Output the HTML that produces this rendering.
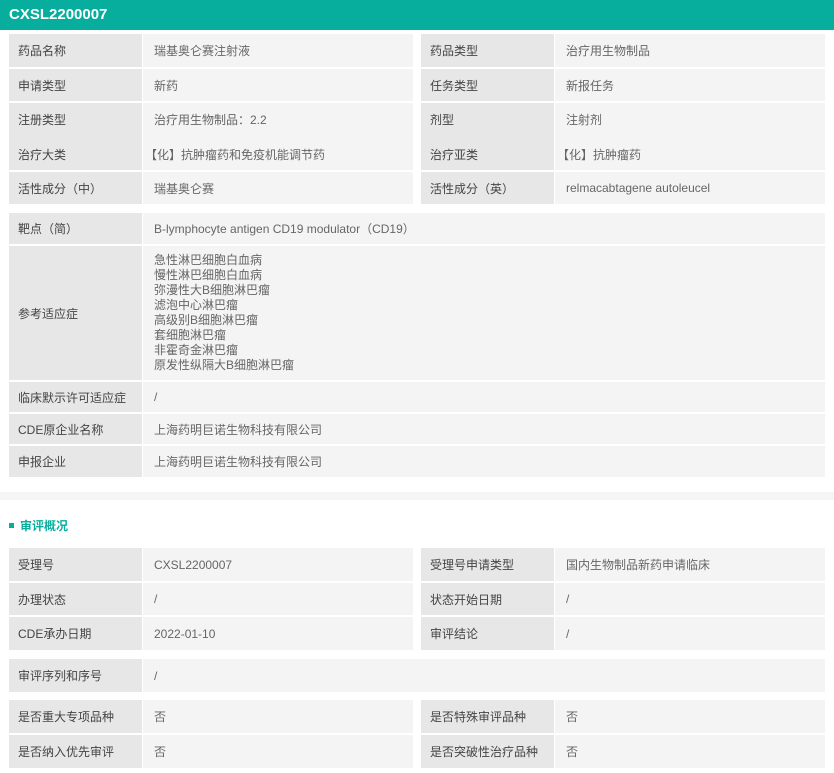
<!DOCTYPE html>
<html><head><meta charset="utf-8"><style>
*{margin:0;padding:0;box-sizing:border-box}
body{width:834px;height:773px;background:#fff;position:relative;overflow:hidden;font-family:"Liberation Sans","Noto Sans CJK SC",sans-serif;font-size:12px;color:#333}
.h{position:absolute;left:0;top:0;width:834px;height:30px;background:#07ae9e;color:#fff;font-weight:bold;font-size:15px;line-height:30px;padding-left:9px}
.c{position:absolute;display:flex;align-items:center;padding-left:9px;white-space:nowrap}
.l{background:#e7e7e7;color:#444}
.v{background:#f4f4f4;color:#666;padding-left:11px}
.band{position:absolute;left:0;top:492px;width:834px;height:8px;background:#f5f5f5}
.t{position:absolute;left:9px;top:517px;color:#07ae9e;font-weight:bold;font-size:12px}
.t:before{content:"";display:inline-block;width:5px;height:5px;background:#07ae9e;margin-right:6px;vertical-align:2px}
.ml{line-height:15px;display:block;padding-top:7px}
</style></head><body>
<div class="h">CXSL2200007</div>

<div class="c l" style="left:9px;top:34px;width:133px;height:33px">药品名称</div>
<div class="c v" style="left:143px;top:34px;width:270px;height:33px">瑞基奥仑赛注射液</div>
<div class="c l" style="left:421px;top:34px;width:133px;height:33px">药品类型</div>
<div class="c v" style="left:555px;top:34px;width:270px;height:33px">治疗用生物制品</div>

<div class="c l" style="left:9px;top:69px;width:133px;height:32px">申请类型</div>
<div class="c v" style="left:143px;top:69px;width:270px;height:32px">新药</div>
<div class="c l" style="left:421px;top:69px;width:133px;height:32px">任务类型</div>
<div class="c v" style="left:555px;top:69px;width:270px;height:32px">新报任务</div>

<div class="c l" style="left:9px;top:103px;width:133px;height:67px"></div>
<div class="c v" style="left:143px;top:103px;width:270px;height:67px"></div>
<div class="c l" style="left:421px;top:103px;width:133px;height:67px"></div>
<div class="c v" style="left:555px;top:103px;width:270px;height:67px"></div>
<div class="c" style="left:9px;top:103px;height:33px;color:#444">注册类型</div>
<div class="c" style="left:145px;top:103px;height:33px;color:#666">治疗用生物制品：2.2</div>
<div class="c" style="left:421px;top:103px;height:33px;color:#444">剂型</div>
<div class="c" style="left:557px;top:103px;height:33px;color:#666">注射剂</div>
<div class="c" style="left:9px;top:138px;height:33px;color:#444">治疗大类</div>
<div class="c" style="left:136px;top:138px;height:33px;color:#666">【化】抗肿瘤药和免疫机能调节药</div>
<div class="c" style="left:421px;top:138px;height:33px;color:#444">治疗亚类</div>
<div class="c" style="left:548px;top:138px;height:33px;color:#666">【化】抗肿瘤药</div>

<div class="c l" style="left:9px;top:172px;width:133px;height:32px">活性成分（中）</div>
<div class="c v" style="left:143px;top:172px;width:270px;height:32px">瑞基奥仑赛</div>
<div class="c l" style="left:421px;top:172px;width:133px;height:32px">活性成分（英）</div>
<div class="c v" style="left:555px;top:172px;width:270px;height:32px">relmacabtagene autoleucel</div>

<div class="c l" style="left:9px;top:213px;width:133px;height:31px">靶点（简）</div>
<div class="c v" style="left:143px;top:213px;width:682px;height:31px">B-lymphocyte antigen CD19 modulator（CD19）</div>

<div class="c l" style="left:9px;top:246px;width:133px;height:134px">参考适应症</div>
<div class="c v" style="left:143px;top:246px;width:682px;height:134px;align-items:flex-start"><span class="ml">急性淋巴细胞白血病<br>慢性淋巴细胞白血病<br>弥漫性大B细胞淋巴瘤<br>滤泡中心淋巴瘤<br>高级别B细胞淋巴瘤<br>套细胞淋巴瘤<br>非霍奇金淋巴瘤<br>原发性纵隔大B细胞淋巴瘤</span></div>

<div class="c l" style="left:9px;top:382px;width:133px;height:30px">临床默示许可适应症</div>
<div class="c v" style="left:143px;top:382px;width:682px;height:30px">/</div>
<div class="c l" style="left:9px;top:414px;width:133px;height:30px">CDE原企业名称</div>
<div class="c v" style="left:143px;top:414px;width:682px;height:30px">上海药明巨诺生物科技有限公司</div>
<div class="c l" style="left:9px;top:446px;width:133px;height:31px">申报企业</div>
<div class="c v" style="left:143px;top:446px;width:682px;height:31px">上海药明巨诺生物科技有限公司</div>

<div class="band"></div>
<div class="t">审评概况</div>

<div class="c l" style="left:9px;top:548px;width:133px;height:33px">受理号</div>
<div class="c v" style="left:143px;top:548px;width:270px;height:33px">CXSL2200007</div>
<div class="c l" style="left:421px;top:548px;width:133px;height:33px">受理号申请类型</div>
<div class="c v" style="left:555px;top:548px;width:270px;height:33px">国内生物制品新药申请临床</div>

<div class="c l" style="left:9px;top:583px;width:133px;height:32px">办理状态</div>
<div class="c v" style="left:143px;top:583px;width:270px;height:32px">/</div>
<div class="c l" style="left:421px;top:583px;width:133px;height:32px">状态开始日期</div>
<div class="c v" style="left:555px;top:583px;width:270px;height:32px">/</div>

<div class="c l" style="left:9px;top:617px;width:133px;height:33px">CDE承办日期</div>
<div class="c v" style="left:143px;top:617px;width:270px;height:33px">2022-01-10</div>
<div class="c l" style="left:421px;top:617px;width:133px;height:33px">审评结论</div>
<div class="c v" style="left:555px;top:617px;width:270px;height:33px">/</div>

<div class="c l" style="left:9px;top:659px;width:133px;height:33px">审评序列和序号</div>
<div class="c v" style="left:143px;top:659px;width:682px;height:33px">/</div>

<div class="c l" style="left:9px;top:700px;width:133px;height:33px">是否重大专项品种</div>
<div class="c v" style="left:143px;top:700px;width:270px;height:33px">否</div>
<div class="c l" style="left:421px;top:700px;width:133px;height:33px">是否特殊审评品种</div>
<div class="c v" style="left:555px;top:700px;width:270px;height:33px">否</div>

<div class="c l" style="left:9px;top:735px;width:133px;height:33px">是否纳入优先审评</div>
<div class="c v" style="left:143px;top:735px;width:270px;height:33px">否</div>
<div class="c l" style="left:421px;top:735px;width:133px;height:33px">是否突破性治疗品种</div>
<div class="c v" style="left:555px;top:735px;width:270px;height:33px">否</div>
</body></html>
